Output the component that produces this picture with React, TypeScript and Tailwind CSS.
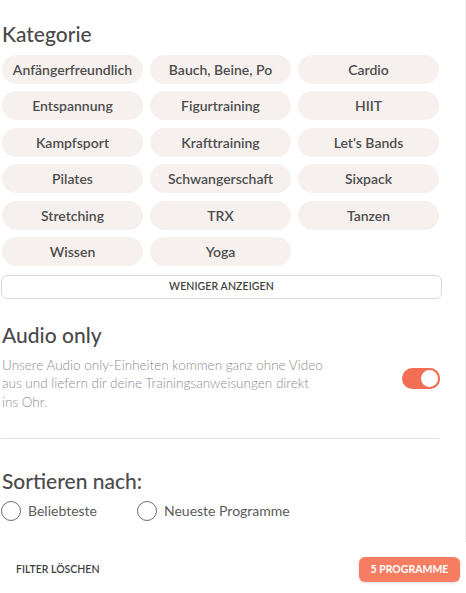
import { useState } from 'react'

const categories = [
  'Anfängerfreundlich',
  'Bauch, Beine, Po',
  'Cardio',
  'Entspannung',
  'Figurtraining',
  'HIIT',
  'Kampfsport',
  'Krafttraining',
  "Let's Bands",
  'Pilates',
  'Schwangerschaft',
  'Sixpack',
  'Stretching',
  'TRX',
  'Tanzen',
  'Wissen',
  'Yoga',
]

function Radio({ label }: { label: string }) {
  return (
    <label className="flex items-center gap-[7px] cursor-pointer">
      <span className="w-[20px] h-[20px] rounded-full border border-[#6b6b6b] bg-white" />
      <span className="text-[14px] text-[#5a5a5a]">{label}</span>
    </label>
  )
}

export default function App() {
  const [audioOnly, setAudioOnly] = useState(true)

  return (
    <div
      className="w-[466px] h-[593px] flex flex-col bg-white text-[#4a4a4a] overflow-hidden"
      style={{ fontFamily: 'Lato, "Open Sans", sans-serif' }}
    >
      {/* scrollable filter area */}
      <div className="h-[542px] border-r border-[#ececec] pl-[1px] pr-[24px]">
        <h2 className="mt-[21px] ml-[1px] text-[21px] leading-[26px] font-medium">Kategorie</h2>
        <div className="mt-[8px] ml-[1px] grid grid-cols-3 gap-x-[7px] gap-y-[7.4px] w-[437px]">
          {categories.map((c) => (
            <button
              key={c}
              className="h-[29px] rounded-full bg-[#f6f1ee] text-[14px] font-semibold text-[#4d4d4d] flex items-center justify-center"
            >
              {c}
            </button>
          ))}
        </div>
        <button className="mt-[9px] w-[441px] h-[24px] rounded-[6px] border border-[#d9d9d9] text-[10.5px] font-semibold tracking-[0.1px] text-[#3f3f3f] flex items-center justify-center">
          WENIGER ANZEIGEN
        </button>

        <h2 className="mt-[23px] ml-[1px] text-[21px] leading-[26px] font-medium">Audio only</h2>
        <div className="mt-[8px] ml-[1px] flex items-start justify-between w-[438px]">
          <p className="w-[326px] text-[13.5px] leading-[18.5px] font-light text-[#8c8c8c]">
            Unsere Audio only-Einheiten kommen ganz ohne Video aus und liefern dir deine Trainingsanweisungen direkt ins Ohr.
          </p>
          <button
            onClick={() => setAudioOnly(!audioOnly)}
            className="mt-[12px] w-[38px] h-[21px] rounded-full bg-[#f26e55] flex items-center justify-end"
          >
            <span className="w-[21px] h-[21px] rounded-full bg-white border-2 border-[#f26e55]" />
          </button>
        </div>
        <div className="mt-[27px] w-[438px] border-t border-[#e2e2e2]" />

        <h2 className="mt-[29px] ml-[1px] text-[21px] leading-[26px] font-medium">Sortieren nach:</h2>
        <div className="mt-[6px] flex items-center gap-[40px]">
          <Radio label="Beliebteste" />
          <Radio label="Neueste Programme" />
        </div>
      </div>

      {/* footer */}
      <div className="flex-1 flex items-center justify-between pl-[16px] pr-[6px] pt-[4px]">
        <button className="text-[10.5px] font-semibold text-[#3f3f3f]">FILTER LÖSCHEN</button>
        <button className="w-[101px] h-[25px] rounded-[6px] bg-[#f77d62] text-white text-[10.5px] font-bold shadow-[0_1px_3px_rgba(0,0,0,0.15)]">
          5 PROGRAMME
        </button>
      </div>
    </div>
  )
}
